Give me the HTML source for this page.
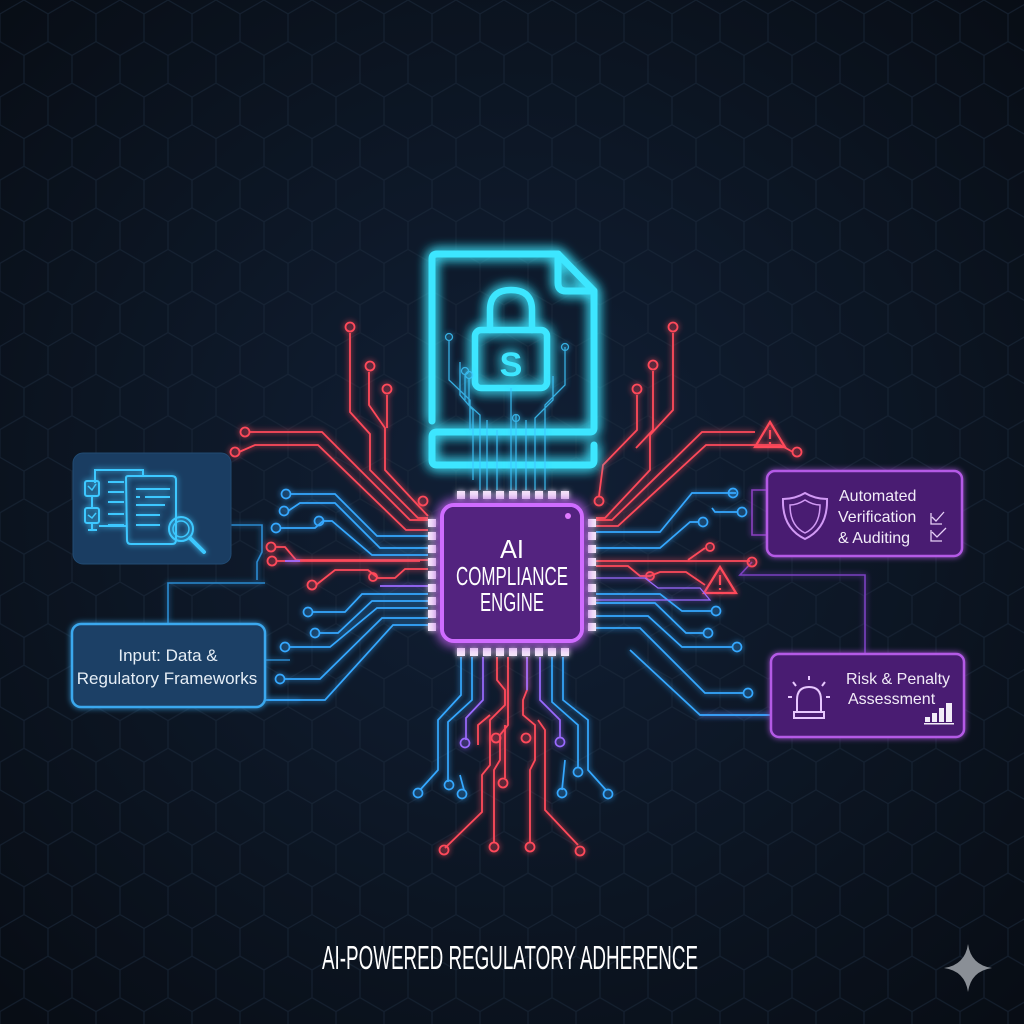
<!DOCTYPE html>
<html><head><meta charset="utf-8"><style>
html,body{margin:0;padding:0;background:#0b121c;}
svg{display:block}
text{font-family:"Liberation Sans Narrow","Liberation Sans",sans-serif;}
</style></head><body>
<svg width="1024" height="1024" viewBox="0 0 1024 1024" xmlns="http://www.w3.org/2000/svg">
<defs>
<radialGradient id="bg" cx="50%" cy="48%" r="70%">
<stop offset="0" stop-color="#112037"/><stop offset="0.6" stop-color="#0c1522"/><stop offset="1" stop-color="#080d15"/>
</radialGradient>
<pattern id="hex" width="48" height="83.14" patternUnits="userSpaceOnUse">
<path d="M0,13.86 L24,0 L48,13.86 M24,0 V-27.7 M0,13.86 V41.57 L24,55.43 L48,41.57 V13.86 M24,55.43 V83.14" fill="none" stroke="#1c2a3c" stroke-width="1.2"/>
</pattern>
<filter id="glow" x="-20%" y="-20%" width="140%" height="140%">
<feGaussianBlur stdDeviation="3" result="b"/><feMerge><feMergeNode in="b"/><feMergeNode in="SourceGraphic"/></feMerge>
</filter>
<filter id="glow2" x="-30%" y="-30%" width="160%" height="160%">
<feGaussianBlur stdDeviation="6" result="b"/><feMerge><feMergeNode in="b"/><feMergeNode in="b"/><feMergeNode in="SourceGraphic"/></feMerge>
</filter>
</defs>
<rect width="1024" height="1024" fill="url(#bg)"/>
<rect width="1024" height="1024" fill="url(#hex)" opacity="0.6"/>

<!-- connectors -->
<g fill="none" stroke-width="1.6" filter="url(#glow)">
<path d="M230,525 H262 V552 L257,562 V580" stroke="#2a8ad0"/>
<path d="M168,623 V583 H265" stroke="#2a8ad0"/>
<path d="M265,660 H290 M265,700 H300" stroke="#2a8ad0"/>
<path d="M766,490 H752 V535 H766" stroke="#8a40c0"/>
<path d="M752,562 L740,575 H865 V653" stroke="#7a40c0"/>
<path d="M770,715 H700" stroke="#7a40c0"/>
</g>

<!-- red traces -->
<g fill="none" stroke="#ff4a5a" stroke-width="1.8" filter="url(#glow)">
<path d="M350,333 V412 L370,434 V470 L418,518 H428"/>
<path d="M369,372 V405 L385,428 V470 L428,516"/>
<path d="M387,395 V428"/>
<circle cx="350" cy="327" r="4.5"/><circle cx="370" cy="366" r="4.5"/><circle cx="387" cy="389" r="4.5"/><circle cx="423" cy="501" r="4.5"/>
<path d="M249,432 H322 L410,520 H428"/><circle cx="245" cy="432" r="4.5"/>
<path d="M239,452 L255,445 H318 L406,530 H428"/><circle cx="235" cy="452" r="4.5"/>
<path d="M276,547 H285 L296,560 H428"/><circle cx="271" cy="547" r="4.5"/>
<path d="M276,561 H420"/><circle cx="272" cy="561" r="4.5"/>
<path d="M316,585 L335,570 H368 L378,578 H395 L405,569 H428"/><circle cx="312" cy="585" r="4.5"/><circle cx="373" cy="577" r="4"/>
<path d="M673,333 V410 L650,435 V470 L605,518 H596"/><circle cx="673" cy="327" r="4.5"/>
<path d="M653,371 V430 L636,448"/><circle cx="653" cy="365" r="4.5"/>
<path d="M637,395 V430 L603,465 L599,496"/><circle cx="637" cy="389" r="4.5"/><circle cx="599" cy="501" r="4.5"/>
<path d="M596,520 H612 L702,432 H755"/>
<path d="M596,526 H618 L706,445 H780 L793,452"/><circle cx="797" cy="452" r="4.5"/>
<path d="M596,561 H750"/><circle cx="752" cy="562" r="4.5"/>
<path d="M596,566 H628 L640,576 H650 L660,572 H686 L705,585"/><circle cx="650" cy="576" r="4"/>
<path d="M688,560 L705,548"/><circle cx="710" cy="547" r="4"/>
<path d="M497,657 V680 L505,690 V705 L490,720 V765 L482,775 V812 L445,848"/><circle cx="444" cy="850" r="4.5"/>
<path d="M508,657 V725 L500,735 V760 L494,770 V843"/><circle cx="494" cy="847" r="4.5"/>
<path d="M527,657 V690 L523,700 V715 L535,725 V760 L530,770 V843"/><circle cx="530" cy="847" r="4.5"/>
<path d="M538,720 L545,730 V810 L578,845"/><circle cx="580" cy="851" r="4.5"/>
<path d="M490,715 L478,725 V745 M505,725 V778"/><circle cx="496" cy="738" r="4.5"/><circle cx="526" cy="738" r="4.5"/><circle cx="503" cy="783" r="4.5"/>
</g>

<g fill="none" stroke="#ff4a5a" stroke-width="2.2" filter="url(#glow)">
<path d="M770,422 L785,447 H755 Z"/><path d="M770,430 V439 M770,442 V444"/>
<path d="M720,567 L736,593 H704 Z"/><path d="M720,575 V585 M720,588 V590"/>
</g>

<g fill="none" stroke-width="1.7" filter="url(#glow)">
<g stroke="#35a8ff">
<path d="M290,494 H335 L377,536 H428"/><circle cx="286" cy="494" r="4.5"/>
<path d="M288,511 L300,503 H335 L380,548 H428"/><circle cx="284" cy="511" r="4.5"/>
<path d="M280,528 H315 L323,521 H332 L372,555 H428"/><circle cx="276" cy="528" r="4.5"/><circle cx="319" cy="521" r="4.5"/>
<path d="M312,612 H345 L362,594 H428"/><circle cx="308" cy="612" r="4.5"/>
<path d="M319,633 H338 L372,601 H428"/><circle cx="315" cy="633" r="4.5"/>
<path d="M289,647 H330 L377,608 H428"/><circle cx="285" cy="647" r="4.5"/>
<path d="M284,679 H320 L382,618 H428"/><circle cx="280" cy="679" r="4.5"/>
<path d="M265,700 H325 L393,625 H428"/>
<path d="M736,493 H692 L660,532 H596"/><circle cx="733" cy="493" r="4.5"/>
<path d="M738,512 H715 L712,508"/><circle cx="742" cy="512" r="4.5"/>
<path d="M699,522 H690 L660,548 H596"/><circle cx="703" cy="522" r="4.5"/>
<path d="M712,611 H682 L660,594 H596"/><circle cx="716" cy="611" r="4.5"/>
<path d="M704,633 H686 L655,603 H596"/><circle cx="708" cy="633" r="4.5"/>
<path d="M733,647 H682 L648,616 H596"/><circle cx="737" cy="647" r="4.5"/>
<path d="M744,693 H705 L640,628 H596"/><circle cx="748" cy="693" r="4.5"/>
<path d="M770,715 H700 L630,650"/>
<path d="M461,657 V695 L438,720 V770 L420,790"/><circle cx="418" cy="793" r="4.5"/>
<path d="M472,657 V700 L448,722 V782"/><circle cx="449" cy="785" r="4.5"/>
<path d="M460,775 L464,790"/><circle cx="462" cy="794" r="4.5"/>
<path d="M563,657 V700 L588,720 V770 L606,790"/><circle cx="608" cy="794" r="4.5"/>
<path d="M552,657 V702 L578,725 V768"/><circle cx="578" cy="772" r="4.5"/>
<path d="M565,760 L562,790"/><circle cx="562" cy="793" r="4.5"/>
</g>
<g stroke="#9a6aff">
<path d="M285,561 H300 M380,586 H428"/>
<path d="M483,657 V700 L466,718 V740"/><circle cx="465" cy="743" r="4.5"/>
<path d="M540,657 V700 L560,720 V738"/><circle cx="560" cy="742" r="4.5"/>
<path d="M527,657 V690"/>
<path d="M596,578 H645 L658,588 H700 L710,600 H596" stroke-width="1.2"/>
</g>
</g>

<!-- document -->
<g fill="none" stroke="#3ee6ff" stroke-width="7" stroke-linejoin="round" stroke-linecap="round" filter="url(#glow2)">
<path d="M432,421 V259 Q432,254 437,254 H558 L594,291 V421"/>
<path d="M558,254 V283 Q558,291 566,291 H594"/>
<path d="M594,420 V428 Q594,432 590,432 H437 Q432,432 432,437 V460 Q432,465 437,465 H590 Q594,465 594,460 V445"/>
<path d="M490,330 V310 Q490,290 511,290 Q532,290 532,310 V330" stroke-width="6.5"/>
<rect x="475" y="330" width="72" height="58" rx="6" stroke-width="6.5"/>
<text x="511" y="376" fill="#3ee6ff" stroke="none" font-size="34" font-weight="bold" text-anchor="middle" style="font-family:'Liberation Sans',sans-serif">S</text>
</g>
<g fill="none" stroke="#3ec8ff" stroke-width="1.3" opacity="0.85" filter="url(#glow)">
<path d="M449,341 V380 L470,400 V430 M460,362 V395 L473,410 V480"/>
<path d="M469,379 V405 L480,415 V490 M465,375 V400"/>
<path d="M511,388 V490 M516,415 V490"/>
<path d="M565,347 V385 L545,405 V490 M553,376 V400 L535,418 V490"/>
<path d="M497,430 V490 M526,420 V490 M487,420 V490"/>
<circle cx="449" cy="337" r="3.5"/><circle cx="465" cy="371" r="3.5"/><circle cx="469" cy="375" r="3.5"/><circle cx="565" cy="347" r="3.5"/><circle cx="516" cy="418" r="3.5"/>
</g>

<!-- chip -->
<g fill="#f4e8f8" filter="url(#glow)">
<rect x="457" y="491" width="8" height="8"/><rect x="470" y="491" width="8" height="8"/><rect x="483" y="491" width="8" height="8"/><rect x="496" y="491" width="8" height="8"/><rect x="509" y="491" width="8" height="8"/><rect x="522" y="491" width="8" height="8"/><rect x="535" y="491" width="8" height="8"/><rect x="548" y="491" width="8" height="8"/><rect x="561" y="491" width="8" height="8"/>
<rect x="457" y="648" width="8" height="8"/><rect x="470" y="648" width="8" height="8"/><rect x="483" y="648" width="8" height="8"/><rect x="496" y="648" width="8" height="8"/><rect x="509" y="648" width="8" height="8"/><rect x="522" y="648" width="8" height="8"/><rect x="535" y="648" width="8" height="8"/><rect x="548" y="648" width="8" height="8"/><rect x="561" y="648" width="8" height="8"/>
<rect x="428" y="519" width="8" height="8"/><rect x="428" y="532" width="8" height="8"/><rect x="428" y="545" width="8" height="8"/><rect x="428" y="558" width="8" height="8"/><rect x="428" y="571" width="8" height="8"/><rect x="428" y="584" width="8" height="8"/><rect x="428" y="597" width="8" height="8"/><rect x="428" y="610" width="8" height="8"/><rect x="428" y="623" width="8" height="8"/>
<rect x="588" y="519" width="8" height="8"/><rect x="588" y="532" width="8" height="8"/><rect x="588" y="545" width="8" height="8"/><rect x="588" y="558" width="8" height="8"/><rect x="588" y="571" width="8" height="8"/><rect x="588" y="584" width="8" height="8"/><rect x="588" y="597" width="8" height="8"/><rect x="588" y="610" width="8" height="8"/><rect x="588" y="623" width="8" height="8"/>
</g>
<rect x="442" y="505" width="140" height="136" rx="12" fill="#4e1f7a" stroke="#cf6cff" stroke-width="4" filter="url(#glow2)"/>
<rect x="444" y="507" width="136" height="132" rx="10" fill="#53237f"/>
<circle cx="568" cy="516" r="3" fill="#e07aff"/>
<g fill="#ffffff" font-size="26" text-anchor="middle">
<text x="512" y="558" textLength="24" lengthAdjust="spacingAndGlyphs">AI</text>
<text x="512" y="585" textLength="112" lengthAdjust="spacingAndGlyphs">COMPLIANCE</text>
<text x="512" y="611" textLength="64" lengthAdjust="spacingAndGlyphs">ENGINE</text>
</g>

<!-- left box 1 -->
<rect x="73" y="453" width="158" height="111" rx="10" fill="#1a3d62" stroke="#214a72" stroke-width="1"/>
<g fill="none" stroke="#3ec8ff" stroke-width="2" filter="url(#glow)">
<path d="M95,483 V470 H143 V476"/>
<rect x="85" y="481" width="14" height="15" rx="2"/><rect x="85" y="508" width="14" height="15" rx="2"/>
<path d="M92,496 V508 M92,523 V530 M88,530 H97"/>
<path d="M108,482 H124 M108,492 H124 M108,502 H124 M108,514 H124 M108,525 H124 M99,526 H126"/>
<path d="M126,478 Q126,476 128,476 H172 Q176,476 176,480 V540 Q176,544 172,544 H131 Q127,544 127,540 Z"/>
<path d="M136,489 H170 M145,497 H170 M136,505 H165 M136,515 H160 M136,525 H160"/>
<path d="M136,497 H140"/>
<circle cx="181" cy="529" r="12"/><circle cx="181" cy="529" r="8" stroke-width="1.5"/>
<path d="M190,538 L204,552" stroke-width="4" stroke-linecap="round"/>
<path d="M88,486 L92,490 L96,484 M88,515 L92,518 L96,513" stroke-width="1.5"/>
</g>

<!-- left box 2 -->
<rect x="72" y="624" width="193" height="83" rx="9" fill="#1a3f66" stroke="#3aa8ee" stroke-width="2.5" filter="url(#glow)"/>
<g fill="#e6eef6" font-size="17" text-anchor="middle" style="font-family:'Liberation Sans',sans-serif">
<text x="168" y="661">Input: Data &amp;</text>
<text x="167" y="684">Regulatory Frameworks</text>
</g>

<!-- right box 1 -->
<rect x="767" y="471" width="195" height="85" rx="8" fill="#4a1f72" stroke="#b45ae6" stroke-width="2.5" filter="url(#glow)"/>
<g fill="none" stroke="#d29af5" stroke-width="2">
<path d="M805,493 Q795,499 783,499 Q782,528 805,539 Q828,528 827,499 Q815,499 805,493 Z"/>
<path d="M805,500 Q797,505 790,505 Q790,526 805,533 Q820,526 820,505 Q813,505 805,500 Z" stroke-width="1.5"/>
<path d="M932,517 L936,521 L944,512 M931,513 V524 H942 M932,532 L937,537 L946,528 M931,530 V541 H942" stroke="#e6d0f6" stroke-width="1.3"/>
</g>
<g fill="#f2ecf8" font-size="16" style="font-family:'Liberation Sans',sans-serif">
<text x="839" y="501">Automated</text>
<text x="838" y="522">Verification</text>
<text x="838" y="543">&amp; Auditing</text>
</g>

<!-- right box 2 -->
<rect x="771" y="654" width="193" height="83" rx="8" fill="#4a1f72" stroke="#b45ae6" stroke-width="2.5" filter="url(#glow)"/>
<g fill="none" stroke="#e8c8ff" stroke-width="2">
<path d="M797,712 V700 Q797,687 809,687 Q821,687 821,700 V712"/>
<rect x="794" y="712" width="30" height="6"/>
<path d="M809,676 V680 M793,682 L796,686 M825,682 L822,686 M788,697 H792 M826,697 H830"/>
</g>
<g fill="#f2ecf8">
<rect x="925" y="717" width="5" height="5"/><rect x="932" y="713" width="5" height="9"/><rect x="939" y="708" width="5" height="14"/><rect x="946" y="703" width="6" height="19"/>
<rect x="924" y="723" width="30" height="1.5"/>
</g>
<g fill="#f2ecf8" font-size="16" style="font-family:'Liberation Sans',sans-serif">
<text x="846" y="684">Risk &amp; Penalty</text>
<text x="848" y="704">Assessment</text>
</g>

<text x="322" y="969" fill="#ffffff" font-size="33" textLength="376" lengthAdjust="spacingAndGlyphs">AI-POWERED REGULATORY ADHERENCE</text>

<path d="M968,944 Q971,965 992,968 Q971,971 968,992 Q965,971 944,968 Q965,965 968,944 Z" fill="#8a8f96"/>
</svg>
</body></html>
